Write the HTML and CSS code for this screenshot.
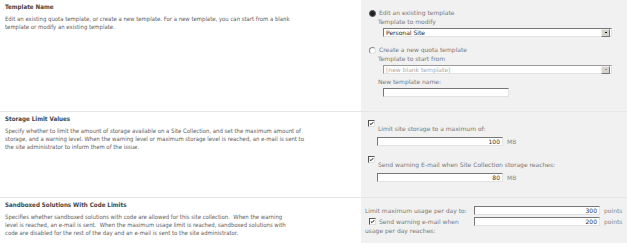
FILE: index.html
```html
<!DOCTYPE html>
<html lang="en">
<head>
  <meta charset="UTF-8" />
  <title>Quota Templates</title>
  <link rel="stylesheet" href="styles.css">
</head>
<body>

  <div class="section sec-template">
    <div class="desc">
      <h3>Template Name</h3>
      <p>Edit an existing quota template, or create a new template. For a new template, you can start from a blank template or modify an existing template.</p>
    </div>
    <div class="panel">
      <div class="opt">
        <span class="radio checked"></span>
        <span class="label">Edit an existing template</span>
      </div>
      <div class="sub">
        <div class="label">Template to modify</div>
        <div class="select">
          <span class="value">Personal Site</span>
          <span class="drop"><span class="arrow"></span></span>
        </div>
      </div>
      <div class="opt opt-second">
        <span class="radio"></span>
        <span class="label">Create a new quota template</span>
      </div>
      <div class="sub">
        <div class="label">Template to start from</div>
        <div class="select disabled">
          <span class="value">[new blank template]</span>
          <span class="drop"><span class="arrow"></span></span>
        </div>
        <div class="label name-label">New template name:</div>
        <div class="textbox name-box"></div>
      </div>
    </div>
  </div>

  <div class="section sec-storage">
    <div class="desc">
      <h3>Storage Limit Values</h3>
      <p>Specify whether to limit the amount of storage available on a Site Collection, and set the maximum amount of storage, and a warning level. When the warning level or maximum storage level is reached, an e-mail is sent to the site administrator to inform them of the issue.</p>
    </div>
    <div class="panel">
      <div class="check-row">
        <span class="checkbox"><svg viewBox="0 0 6 6"><path d="M1 3 L2.4 4.4 L5 1.4" /></svg></span>
        <span class="label">Limit site storage to a maximum of:</span>
      </div>
      <div class="field">
        <div class="textbox size-box"><span class="num">100</span></div>
        <span class="unit">MB</span>
      </div>
      <div class="check-row second">
        <span class="checkbox"><svg viewBox="0 0 6 6"><path d="M1 3 L2.4 4.4 L5 1.4" /></svg></span>
        <span class="label">Send warning E-mail when Site Collection storage reaches:</span>
      </div>
      <div class="field">
        <div class="textbox size-box"><span class="num">80</span></div>
        <span class="unit">MB</span>
      </div>
    </div>
  </div>

  <div class="section sec-sandbox">
    <div class="desc">
      <h3>Sandboxed Solutions With Code Limits</h3>
      <p class="narrow">Specifies whether sandboxed solutions with code are allowed for this site collection.&nbsp; When the warning level is reached, an e-mail is sent.&nbsp; When the maximum usage limit is reached, sandboxed solutions with code are disabled for the rest of the day and an e-mail is sent to the site administrator.</p>
    </div>
    <div class="panel">
      <div class="points-grid">
        <span class="label">Limit maximum usage per day to:</span>
        <div class="field">
          <div class="textbox points-box"><span class="num">300</span></div>
          <span class="unit">points</span>
        </div>
        <span class="label warn-label"><span class="checkbox"><svg viewBox="0 0 6 6"><path d="M1 3 L2.4 4.4 L5 1.4" /></svg></span>Send warning e-mail when<br>usage per day reaches:</span>
        <div class="field">
          <div class="textbox points-box"><span class="num">200</span></div>
          <span class="unit">points</span>
        </div>
      </div>
    </div>
  </div>

</body>
</html>
```

FILE: styles.css
```css
body {
  margin: 0;
  background: #fff;
  font-family: "DejaVu Sans", Verdana, sans-serif;
}

.section {
  display: grid;
  grid-template-columns: 361px 1fr;
  border-bottom: 1px solid #e6e6e6;
}

.sec-template { height: 111px; }
.sec-storage { height: 85px; }
.sec-sandbox { height: 45px; border-bottom: none; }

.desc {
  padding: 3px 0 0 5px;
  font-family: "DejaVu Sans Condensed", Tahoma, sans-serif;
}

.desc h3 {
  margin: 0;
  font-size: 6.2px;
  line-height: 7px;
  color: #444;
}

.desc p {
  margin: 5px 0 0;
  width: 300px;
  font-size: 5.95px;
  line-height: 8px;
  color: #5e5e5e;
}

.desc p.narrow {
  width: 290px;
}

.panel {
  background: #f1f1f1;
  padding-top: 9px;
  font-size: 6px;
  color: #777;
}

.label {
  line-height: 8px;
}

/* radio options */
.opt {
  display: flex;
  align-items: center;
  padding-left: 8px;
  height: 8px;
}

.opt-second {
  margin-top: 9px;
}

.radio {
  width: 5px;
  height: 5px;
  border-radius: 50%;
  border: 1px solid #8a8a8a;
  border-right-color: #e0e0e0;
  border-bottom-color: #e0e0e0;
  background: #fff;
  margin-right: 3px;
}

.radio.checked {
  background: #222;
  border-color: #555;
}

.sub {
  padding-left: 17px;
  padding-top: 1px;
}

.select {
  display: flex;
  align-items: center;
  justify-content: space-between;
  width: 227px;
  height: 7px;
  margin: 2px 0 0 5px;
  background: #fff;
  border: 1px solid #e2e2e2;
  border-top-color: #777;
  border-left-color: #777;
  color: #222;
  line-height: 7px;
}

.select .value {
  padding-left: 2px;
}

.select.disabled {
  color: #aaa;
  border-top-color: #9a9a9a;
  border-left-color: #9a9a9a;
}

.drop {
  display: flex;
  align-items: center;
  justify-content: center;
  width: 7px;
  height: 6px;
  margin-right: 1px;
  background: #d6d3cc;
  border: 1px solid #eee;
  border-right-color: #777;
  border-bottom-color: #777;
}

.arrow {
  width: 2px;
  height: 1px;
  background: #111;
}

.select.disabled .arrow {
  background: #999;
}

.name-label {
  margin-top: 4px;
}

.textbox {
  display: flex;
  align-items: center;
  justify-content: flex-end;
  height: 7px;
  background: #fff;
  border: 1px solid #e2e2e2;
  border-top-color: #777;
  border-left-color: #777;
  color: #333;
  line-height: 7px;
}

.name-box {
  width: 124px;
  margin: 2px 0 0 5px;
}

/* storage */
.sec-storage .panel {
  padding-top: 8px;
}

.check-row {
  display: flex;
  align-items: flex-start;
  padding-left: 7px;
}

.check-row .label {
  margin: 5px 0 0 3px;
}

.check-row.second {
  margin-top: 10px;
}

.checkbox {
  display: inline-block;
  width: 5px;
  height: 5px;
  background: #fff;
  border: 1px solid #e0e0e0;
  border-top-color: #555;
  border-left-color: #555;
}

.checkbox svg {
  display: block;
  width: 5px;
  height: 5px;
  fill: none;
  stroke: #111;
  stroke-width: 1.2;
}

.field {
  display: flex;
  align-items: center;
  gap: 4px;
  line-height: 9px;
}

.sec-storage .field {
  padding-left: 16px;
  margin-top: 4px;
}

.size-box {
  width: 124px;
}

.num {
  padding-right: 2px;
}

.unit {
  color: #888;
}

/* sandbox */
.sec-sandbox .panel {
  padding-top: 8px;
}

.points-grid {
  display: grid;
  grid-template-columns: 109px auto;
  align-items: start;
  row-gap: 2px;
  padding-left: 4px;
}

.points-grid > .label:first-child {
  line-height: 9px;
}

.points-box {
  width: 124px;
}

.warn-label {
  line-height: 9px;
}

.warn-label .checkbox {
  margin: 0 3px 0 4px;
  vertical-align: -1px;
}
```
